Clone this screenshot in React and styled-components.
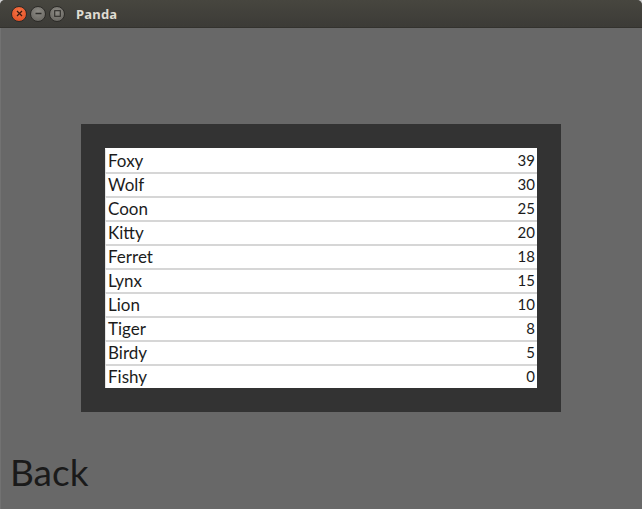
import React from "react";
import styled, { createGlobalStyle } from "styled-components";

const GlobalStyle = createGlobalStyle`
  html, body {
    margin: 0;
    padding: 0;
    background: #d0d0d0;
  }
  #root {
    width: 642px;
    height: 509px;
  }
`;

const Window = styled.div`
  width: 642px;
  height: 509px;
  display: flex;
  flex-direction: column;
  border-radius: 5px 5px 0 0;
  overflow: hidden;
  background: #686868;
`;

const TitleBar = styled.div`
  height: 28px;
  flex: none;
  display: flex;
  align-items: center;
  padding-left: 11px;
  box-sizing: border-box;
  background: linear-gradient(#47463f, #3c3b37);
  border-bottom: 1px solid #33322e;
`;

const Controls = styled.div`
  display: flex;
  gap: 3px;
  margin-right: 11px;
`;

const WinButton = styled.div`
  width: 16px;
  height: 16px;
  border-radius: 50%;
  display: flex;
  align-items: center;
  justify-content: center;
  box-sizing: border-box;
  border: 1px solid #2c2b28;
  background: ${(p) =>
    p.$close
      ? "radial-gradient(circle at 50% 35%, #f6784a, #e0461c)"
      : "radial-gradient(circle at 50% 35%, #8e8c86, #62605b)"};
`;

const Title = styled.span`
  font-family: "Noto Sans", "Open Sans", sans-serif;
  font-weight: 700;
  font-size: 13px;
  color: #dfdbd2;
  letter-spacing: 0.2px;
`;

const Content = styled.div`
  flex: 1;
  display: flex;
  flex-direction: column;
  align-items: center;
  padding-top: 96px;
  box-shadow: inset 1px 0 0 #727272;
  position: relative;
`;

const Panel = styled.div`
  width: 480px;
  padding: 24px;
  box-sizing: border-box;
  background: #333333;
`;

const List = styled.ul`
  margin: 0;
  padding: 0;
  list-style: none;
  background: #ffffff;
`;

const Row = styled.li`
  height: 24px;
  box-sizing: border-box;
  display: flex;
  align-items: center;
  justify-content: space-between;
  padding: 0 2px 2px 2px;
  background: #ffffff;
  border-left: 1px solid #e4e4e4;
  border-top: 2px solid #d6d6d6;
  font-family: "Lato", "Open Sans", sans-serif;
  font-size: 17px;
  color: #1c1c1c;
  &:first-child {
    border-top-color: #ffffff;
  }
`;

const Score = styled.span`
  font-size: 15px;
`;

const Back = styled.div`
  position: absolute;
  left: 10px;
  bottom: 19px;
  font-family: "Lato", "Open Sans", sans-serif;
  font-size: 37px;
  line-height: 1;
  color: #1a1a1a;
`;

const scores = [
  ["Foxy", 39],
  ["Wolf", 30],
  ["Coon", 25],
  ["Kitty", 20],
  ["Ferret", 18],
  ["Lynx", 15],
  ["Lion", 10],
  ["Tiger", 8],
  ["Birdy", 5],
  ["Fishy", 0],
];

const App = () => (
  <>
    <GlobalStyle />
    <Window>
      <TitleBar>
        <Controls>
          <WinButton $close>
            <svg width="7" height="7" viewBox="0 0 7 7">
              <path d="M1 1L6 6M6 1L1 6" stroke="#3a1a10" strokeWidth="1.3" />
            </svg>
          </WinButton>
          <WinButton>
            <svg width="7" height="7" viewBox="0 0 7 7">
              <path d="M0.5 3.5H6.5" stroke="#2e2d2a" strokeWidth="1.3" />
            </svg>
          </WinButton>
          <WinButton>
            <svg width="7" height="7" viewBox="0 0 7 7">
              <rect x="0.7" y="0.7" width="5.6" height="5.6" fill="none" stroke="#2e2d2a" strokeWidth="1.1" />
            </svg>
          </WinButton>
        </Controls>
        <Title>Panda</Title>
      </TitleBar>
      <Content>
        <Panel>
          <List>
            {scores.map(([name, score]) => (
              <Row key={name}>
                <span>{name}</span>
                <Score>{score}</Score>
              </Row>
            ))}
          </List>
        </Panel>
        <Back>Back</Back>
      </Content>
    </Window>
  </>
);

export default App;
